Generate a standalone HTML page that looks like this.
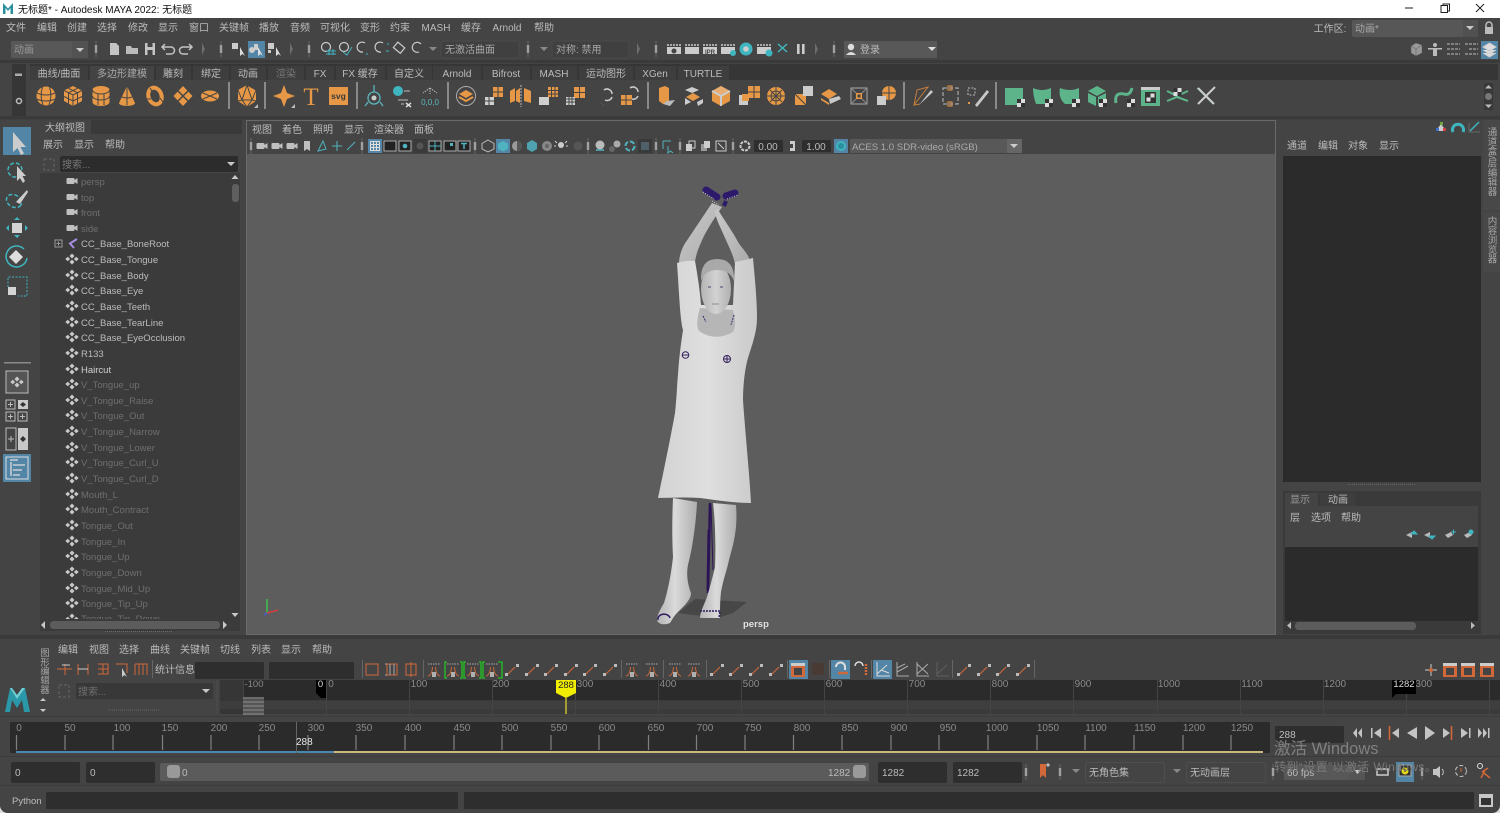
<!DOCTYPE html>
<html><head><meta charset="utf-8"><title>Autodesk MAYA 2022</title>
<style>
html,body{margin:0;padding:0;width:1500px;height:813px;overflow:hidden;background:#444}
svg{display:block;position:absolute;left:0;top:0;filter:blur(.3px)}
text{font-family:"Liberation Sans","Noto Sans CJK SC",sans-serif;font-size:10px;fill:#bcbcbc}
.c text{text-anchor:middle}
.d text{fill:#6f6f6f;font-size:9.5px}
.o text{font-size:9.5px}
.r text{fill:#8a8a8a;font-size:10px;text-anchor:middle}
</style></head><body>
<svg width="1500" height="813" viewBox="0 0 1500 813" xmlns="http://www.w3.org/2000/svg">
<defs>
<linearGradient id="lg" x1="0" x2="1" y1="0" y2="0"><stop offset="0" stop-color="#b4b4b4"/><stop offset=".45" stop-color="#dadada"/><stop offset="1" stop-color="#aeaeae"/></linearGradient>
<linearGradient id="ar" x1="0" x2="1" y1="0" y2="1"><stop offset="0" stop-color="#c8c8c8"/><stop offset=".6" stop-color="#b8b8b8"/><stop offset="1" stop-color="#a8a8a8"/></linearGradient>
<linearGradient id="dr" x1="0" x2="1" y1="0" y2="0"><stop offset="0" stop-color="#d2d2d2"/><stop offset=".5" stop-color="#dfdfdf"/><stop offset="1" stop-color="#cacaca"/></linearGradient>
<linearGradient id="fc" x1="0" x2="1" y1="0" y2="0"><stop offset="0" stop-color="#b4b4b4"/><stop offset=".5" stop-color="#d2d2d2"/><stop offset="1" stop-color="#b0b0b0"/></linearGradient>
<g id="h"><path d="M0-8V8" stroke="#666"/><rect x="-1.2" y="-4" width="2.4" height="8" fill="#a0a0a0"/></g>
<path id="t" d="M-1-6L2 0L-1 6Z" fill="#6e6e6e"/>
<path id="dn" d="M-4-2H4L0 2Z" fill="#c8c8c8"/>
<path id="dnd" d="M-4-2H4L0 2Z" fill="#888"/>
<g id="sep"><rect x="-1" y="-14" width="2" height="27" fill="#8a8a8a"/></g>
<path id="dia" d="M0-5.500L2.500-3L0-.5L-2.500-3ZM-4.200-2.300L-1.900 0L-4.200 2.300L-6.700 0ZM4.200-2.300L6.700 0L4.200 2.300L1.900 0ZM0 .5L2.500 3L0 5.500L-2.500 3Z" fill="#c9c9c9"/>
<g id="cam"><rect x="-5.500" y="-3" width="8" height="6" rx="1" fill="#c0c0c0"/><path d="M2.500-1L5.500-3V3L2.500 1Z" fill="#c0c0c0"/></g>
<g id="sp"><circle r="9.5" fill="#e69847"/><path d="M-9-3Q0 1 9-3M-9.5 3Q0 7 9.5 3M-3.500-9Q-6.500 0-3 9M3.500-9Q6.500 0 3 9" stroke="#444" fill="none"/></g>
<g id="cb"><path d="M0-10L9-5.500V5L0 10L-9 5V-5.500Z" fill="#e69847"/><path d="M-9-5.500L0-1L9-5.500M0-1V10M-4.500-7.700L4.500-3.300M4.500-7.700L-4.500-3.300M-4.500-3V7.500M4.500-3V7.500M-9 .5L0 5L9 .5" stroke="#444" fill="none"/></g>
<g id="cy"><path d="M-8.500-6A8.500 4 0 0 1 8.500-6V6A8.500 4 0 0 1-8.500 6Z" fill="#e69847"/><path d="M-8.500-6A8.500 4 0 0 0 8.500-6M-8.500 0A8.500 4 0 0 0 8.500 0M-3-2V9M3-2V9" stroke="#444" fill="none"/></g>
<g id="co"><path d="M0-10L8 7A8 3 0 0 1-8 7Z" fill="#e69847"/><path d="M0-10V9.500M-5 1Q0 3 5 1" stroke="#444" fill="none"/></g>
<g id="to"><ellipse rx="6.500" ry="8.500" transform="rotate(-20)" fill="none" stroke="#e69847" stroke-width="4"/><path d="M-5-8L-2-3M5 2L8 6M-8 3L-4 3" stroke="#444"/></g>
<g id="pl"><path d="M0-10L9.500 0L0 10L-9.500 0Z" fill="#e69847"/><path d="M-5-5L5 5M5-5L-5 5" stroke="#444" stroke-width="1.500"/></g>
<g id="di"><ellipse rx="9" ry="5.500" fill="#e69847"/><path d="M-7-3L7 3M7-3L-7 3" stroke="#444"/></g>
<g id="po"><path d="M0-11L9-6V5L0 11L-9 5V-6Z" fill="#e69847"/><path d="M0-11L-5 4L5 4ZM-9-6L-5 4L0 11L5 4L9-6L0-11M-9 5L-5 4M9 5L5 4" stroke="#444" fill="none"/><path d="M11 8V12H7Z" fill="#bbb"/></g>
<g id="og"><rect x="-1" y="-9" width="10" height="10" fill="#e69847"/><rect x="-9" y="1" width="9" height="8" fill="#cfcfcf"/><path d="M4-9V1M-1-4H9M-5 1V9M-9 5H0" stroke="#444"/></g>
<g id="sw"><path d="M-9-2L1 9H-9Z M-9-2V9H2Z" fill="#e69847"/><path d="M-9-2L2 9" stroke="#444"/><path d="M1-7A5 5 0 0 1 9-3M9 0A5 5 0 0 1 2 3" fill="none" stroke="#ccc" stroke-width="1.500"/></g>
<g id="st"><path d="M-9-2L-1-7L7-2L-1 3Z" fill="#e69847"/><path d="M-9 2L-1 7V9L-9 4Z" fill="#e69847"/><path d="M-1 3L9 0L11 3L0 8Z" fill="#c9c9c9"/></g>
<g id="bx"><path d="M0-10L9-5V5L0 10L-9 5V-5Z" fill="#e69847"/><path d="M0-10L9-5L0 0L-9-5Z" fill="#e8ad72"/><path d="M-9-5L0 0L9-5M0 0V10" stroke="#ccc" stroke-width="2" fill="none"/></g>
<g id="gs"><path d="M-9 9H9V-8H-9Z" fill="#5db48b"/></g>
<g id="ck"><rect x="-4" y="-4" width="8" height="8" fill="#ddd"/><path d="M-4-4H0V0H-4ZM0 0H4V4H0Z" fill="#333"/></g>
<g id="tk"><path d="M-6 6Q-2 5-1.500-3M6 6Q2 5 1.500-3" stroke="#c8683c" fill="none"/><path d="M-6-6H6" stroke="#aaa" stroke-dasharray="1.500 1"/><rect x="-2" y="2" width="4" height="5" fill="#b0b0b0"/></g>
<g id="cu"><path d="M-4 4L3-3" stroke="#c8683c" fill="none" stroke-width="1.200"/><rect x="-7" y="3" width="3" height="3" fill="#bbb"/><rect x="4" y="-6" width="3" height="3" fill="#bbb"/></g>
<g id="wi"><rect x="-7" y="-7" width="14" height="14" fill="#d0683a"/><rect x="-7" y="-7" width="14" height="3" fill="#ccc"/><rect x="-4" y="-2" width="8" height="7" fill="#444"/></g>
<g id="cl"><path d="M-7-3H7V4H-7Z" fill="#ccc"/><path d="M-7-5H7" stroke="#ccc" stroke-width="1.500" stroke-dasharray="2 1"/></g>
</defs>

<rect width="1500" height="813" fill="#444"/>
<!-- title -->
<rect width="1500" height="18" fill="#fff"/>
<path d="M3 14V3L8 8.500L13 3V14H10.500V8L8 11L5.500 8V14Z" fill="#2a8f9d"/>
<text x="18" y="13" style="fill:#111;font-size:10px">无标题* - Autodesk MAYA 2022: 无标题</text>
<path d="M1405 8H1413" stroke="#222"/><path d="M1441 5.500h6.500v7h-6.500zM1443 5.500v-1.500h6.500v7h-2" fill="none" stroke="#222"/><path d="M1476 4L1484 12M1484 4L1476 12" stroke="#222"/>

<!-- menu -->
<g class="c"><text x="16" y="31">文件</text><text x="47" y="31">编辑</text><text x="77" y="31">创建</text><text x="107" y="31">选择</text><text x="138" y="31">修改</text><text x="168" y="31">显示</text><text x="199" y="31">窗口</text><text x="234" y="31">关键帧</text><text x="269" y="31">播放</text><text x="300" y="31">音频</text><text x="335" y="31">可视化</text><text x="370" y="31">变形</text><text x="400" y="31">约束</text><text x="436" y="31">MASH</text><text x="471" y="31">缓存</text><text x="507" y="31">Arnold</text><text x="544" y="31">帮助</text><text x="1330" y="32">工作区:</text></g>
<rect x="1352" y="20" width="126" height="17" rx="2" fill="#575757"/><rect x="1463" y="20" width="15" height="17" fill="#515151"/><text x="1355" y="32" style="fill:#a8a8a8">动画*</text><use href="#dn" x="1470" y="28"/>
<path d="M1486 27V25a3 3 0 0 1 6 0V27" fill="none" stroke="#bbb" stroke-width="1.500"/><rect x="1485" y="27" width="8" height="7" fill="#bbb"/>

<!-- toolbar -->
<rect x="11" y="41" width="77" height="17" rx="1" fill="#585858"/><rect x="72" y="41" width="16" height="17" fill="#525252"/><text x="14" y="53" style="fill:#9a9a9a">动画</text><use href="#dn" x="80" y="50"/>
<use href="#h" x="96" y="49"/>
<path d="M110 43H116L119 46V55H110Z" fill="#c4c4c4"/>
<path d="M126 46H131L132 48H138V54H126Z" fill="#bbb"/>
<path d="M145 43H155V55H145Z" fill="#c4c4c4"/><rect x="147.500" y="43" width="5" height="4" fill="#444"/><rect x="147.500" y="50" width="5" height="5" fill="#444"/>
<path d="M163 47H171A3.500 3.500 0 0 1 171 54H166M165 44L162 47L165 50" fill="none" stroke="#c4c4c4" stroke-width="1.500"/>
<path d="M191 47H183A3.500 3.500 0 0 0 183 54H188M189 44L192 47L189 50" fill="none" stroke="#c4c4c4" stroke-width="1.500"/>
<use href="#t" x="203" y="49"/><use href="#h" x="221" y="49"/>
<rect x="248" y="41" width="17" height="17" fill="#5285a6"/>
<g fill="#ccc"><rect x="232" y="43" width="6" height="6"/><rect x="268" y="43" width="6" height="6"/><rect x="268" y="50" width="3" height="3"/><circle cx="252" cy="50" r="3"/><path d="M254 44H258V50H254Z"/>
<path d="M240 47L240 56L242.500 54L245 56Z" fill="#ddd"/><path d="M258 47V56L260.500 54L263 56Z" fill="#ddd"/><path d="M276 47V56L278.500 54L281 56Z" fill="#ddd"/></g>
<use href="#t" x="291" y="49"/><use href="#h" x="309" y="49"/>
<g fill="none" stroke="#ccc" stroke-width="1.200"><circle cx="326" cy="47" r="4.500"/><circle cx="344" cy="47" r="4.500"/><path d="M365 43a5 5 0 1 0-2 9"/><path d="M383 43a5 5 0 1 0-2 9"/><rect x="395" y="44" width="9" height="7" transform="rotate(40 399 47)"/><path d="M421 44a5 5 0 1 0-2 8"/></g>
<path d="M329 49V55M333 49V55M326 51H336M326 54H336M343 52L347 55L352 47M366 54L368 54M387 44H389M386 51H389" stroke="#3fb5c0" fill="none"/>
<use href="#dnd" x="433" y="49"/>
<rect x="441" y="41" width="78" height="17" rx="2" fill="#404040" stroke="#4a4a4a"/><text x="445" y="53" style="fill:#a8a8a8">无激活曲面</text>
<use href="#h" x="528" y="49"/><use href="#dnd" x="544" y="49"/>
<rect x="552" y="41" width="77" height="17" rx="2" fill="#404040" stroke="#4a4a4a"/><text x="556" y="53" style="fill:#a8a8a8">对称: 禁用</text>
<use href="#t" x="638" y="49"/><use href="#h" x="656" y="49"/>
<use href="#cl" x="674" y="50"/><use href="#cl" x="692" y="50"/><use href="#cl" x="710" y="50"/><use href="#cl" x="728" y="50"/><use href="#cl" x="764" y="50"/>
<circle cx="674" cy="51" r="2.500" fill="#444"/><text x="710" y="54" style="font-size:6px;fill:#444;text-anchor:middle;font-weight:bold">IPR</text>
<circle cx="733" cy="53" r="3" fill="#3fb5c0"/><circle cx="746" cy="49" r="6.500" fill="#3fb5c0"/><circle cx="746" cy="49" r="2.800" fill="#ccc"/><circle cx="769" cy="53" r="3.500" fill="#3fb5c0"/>
<path d="M778 52L787 44M778 44L787 52" stroke="#3fb5c0" stroke-width="1.500"/><rect x="797" y="44" width="2.600" height="10" fill="#ccc"/><rect x="802" y="44" width="2.600" height="10" fill="#ccc"/>
<use href="#t" x="816" y="49"/><use href="#h" x="834" y="49"/>
<rect x="844" y="41" width="93" height="17" fill="#585858"/><circle cx="851" cy="47" r="3.200" fill="#ddd"/><path d="M846 55Q851 49 856 55Z" fill="#ddd"/><text x="860" y="53">登录</text><path d="M928 47H936L932 51Z" fill="#ddd"/>
<path d="M1416 43L1422 45V53L1416 56L1411 53V46ZM1411 46L1416 49V56M1416 49L1422 45" fill="#999" stroke="#555" stroke-width=".5"/>
<g fill="#bbb"><circle cx="1435" cy="45" r="2"/><path d="M1428 48H1442V49.500H1437V56H1433V49.500H1428Z"/><path d="M1447 44H1460M1447 49H1460M1447 54H1460" stroke="#bbb" stroke-dasharray="3 1" fill="none"/><path d="M1465 44H1478M1469 49H1478M1465 54H1478" stroke="#bbb" stroke-dasharray="3 1" fill="none"/></g>
<rect x="1481" y="41" width="17" height="18" fill="#5285a6"/><path d="M1489.500 43L1496 47L1489.500 51L1483 47Z M1483 50L1489.500 54L1496 50M1483 53L1489.500 57L1496 53" fill="#ddd" stroke="#ccc"/>

<!-- separators -->
<rect y="60" width="1500" height="3" fill="#3a3a3a"/>
<rect x="30" y="64" width="1468" height="16" fill="#363636"/>
<rect x="12" y="64" width="14" height="52" fill="#363636"/>
<rect x="15" y="73.500" width="7" height="2.500" fill="#aaa"/><circle cx="19" cy="101" r="2.500" fill="none" stroke="#bbb" stroke-width="1.500"/>
<g fill="#3e3e3e"><rect x="30" y="66" width="58" height="14"/><rect x="156" y="66" width="35" height="14"/><rect x="193" y="66" width="36" height="14"/><rect x="231" y="66" width="35" height="14"/><rect x="268" y="66" width="36" height="14"/><rect x="306" y="66" width="28" height="14"/><rect x="336" y="66" width="49" height="14"/><rect x="387" y="66" width="45" height="14"/><rect x="433" y="66" width="48" height="14"/><rect x="483" y="66" width="47" height="14"/><rect x="532" y="66" width="45" height="14"/><rect x="579" y="66" width="54" height="14"/><rect x="635" y="66" width="41" height="14"/><rect x="678" y="66" width="51" height="14"/></g>
<rect x="90" y="66" width="64" height="14" fill="#444"/>
<g class="c"><text x="59" y="77">曲线/曲面</text><text x="122" y="77" style="fill:#aaa">多边形建模</text><text x="173" y="77">雕刻</text><text x="211" y="77">绑定</text><text x="248" y="77">动画</text><text x="286" y="77" style="fill:#777">渲染</text><text x="320" y="77">FX</text><text x="360" y="77">FX 缓存</text><text x="409" y="77">自定义</text><text x="457" y="77">Arnold</text><text x="506" y="77">Bifrost</text><text x="554" y="77">MASH</text><text x="606" y="77">运动图形</text><text x="655" y="77">XGen</text><text x="703" y="77">TURTLE</text></g>

<!-- shelf icons -->
<use href="#sp" x="46" y="96"/><use href="#cb" x="73" y="96"/><use href="#cy" x="101" y="96"/><use href="#co" x="127" y="96"/><use href="#to" x="155" y="96"/><use href="#pl" x="183" y="96"/><use href="#di" x="210" y="96"/>
<use href="#sep" x="229" y="96"/><use href="#po" x="247" y="96"/><use href="#sep" x="265" y="96"/>
<path d="M284 85L287 93L295 96L287 99L284 107L281 99L273 96L281 93Z" fill="#e69847"/><path d="M295 104V108H291Z" fill="#bbb"/>
<text x="311" y="105" style="font-family:'Liberation Serif',serif;font-size:25px;fill:#e69847;text-anchor:middle">T</text>
<rect x="329" y="87" width="19" height="18" fill="#e69847"/><text x="338.500" y="99" style="font-size:8.500px;fill:#3a3a3a;font-weight:bold;text-anchor:middle">svg</text>
<use href="#sep" x="357" y="96"/>
<g fill="none" stroke="#5cb5bf" stroke-width="1.300"><circle cx="374" cy="98" r="6"/><path d="M374 85V92M368 102L365 106M380 102L383 106"/></g><circle cx="374" cy="98" r="2.500" fill="#ccc"/>
<circle cx="398" cy="91" r="5" fill="#3fb5c0"/><path d="M404 91H410M398 100H408M401 104H404" stroke="#bbb"/><path d="M406 103L411 107M411 103L406 107" stroke="#ddd" stroke-width="1.500"/>
<path d="M430 88L423 93M430 88L437 93M430 88V94" stroke="#bbb" stroke-dasharray="1.500 1" fill="none"/><text x="430" y="105" style="font-size:8px;fill:#5cb5bf;text-anchor:middle">0,0,0</text>
<use href="#sep" x="448" y="96"/>
<circle cx="466" cy="96" r="9.500" fill="none" stroke="#aaa"/><path d="M466 90L473 94L466 98L459 94Z" fill="#e69847"/><path d="M459 97L466 101L473 97" fill="none" stroke="#e69847" stroke-width="2"/>
<use href="#og" x="494" y="96"/>
<path d="M510 91L515 88V101L510 103ZM524 88L531 91V103L524 101Z" fill="#e69847"/><path d="M516 91L520 88V103L516 101Z" fill="#e69847"/><path d="M521 85V107" stroke="#bbb" stroke-dasharray="2 1"/>
<g transform="translate(549 96)"><rect x="-1" y="-9" width="10" height="10" fill="#e69847"/><path d="M-1-5.500H9M-1-2H9M2.500-9V1M6-9V1" stroke="#444"/><rect x="-10" y="1" width="10" height="8" fill="#cfcfcf"/></g>
<g transform="translate(576 96)"><rect x="-2" y="-9" width="11" height="11" fill="#e69847"/><path d="M3.500-9V2M-2-3.500H9" stroke="#444"/><rect x="-10" y="1" width="9" height="8" fill="#cfcfcf"/><path d="M-10 3H-1M-10 6H-1M-7 1V9M-4 1V9" stroke="#444"/></g>
<use href="#sw" x="603" y="97"/>
<g transform="translate(630 96)"><rect x="-9" y="-1" width="11" height="10" fill="#e69847"/><path d="M-4-1V9M-9 4H2" stroke="#444"/><path d="M0-8A5 5 0 0 1 8-4M8 0A5 5 0 0 1 2 3" fill="none" stroke="#ccc" stroke-width="1.500"/></g>
<use href="#sep" x="648" y="96"/>
<g transform="translate(666 96)"><path d="M-7-8L-1-10L3-8V5L-3 8L-7 5Z" fill="#e69847"/><path d="M1 5L9 4L4 10L-3 8Z" fill="#bbb"/></g>
<g transform="translate(694 96)"><path d="M-9-6L-2-9L5-6L-2-3Z" fill="#ccc"/><path d="M-8 1L-1-3L6 1L-1 5Z" fill="#e69847"/><path d="M-9 2L-3 6L-9 9ZM3 6L9 3V7L4 10Z" fill="#ccc"/></g>
<use href="#bx" x="721" y="96"/>
<g transform="translate(749 96)"><rect x="-1" y="-10" width="12" height="12" fill="#e69847"/><path d="M-1-4H11M5-10V2" stroke="#444"/><rect x="-10" y="-1" width="9" height="10" fill="#ccc"/><rect x="-7" y="-2" width="7" height="7" fill="#e69847"/></g>
<g transform="translate(776 96)"><circle r="9" fill="#e69847"/><circle r="5" fill="none" stroke="#444"/><path d="M-9 0H9M0-9V9M-6-6L6 6M6-6L-6 6" stroke="#444"/></g>
<g transform="translate(804 96)"><path d="M-9-2L2 9H-9Z" fill="#e69847"/><path d="M-9-2L2-2L2 9Z" fill="#e69847"/><rect x="-1" y="-10" width="10" height="10" fill="#ccc"/><path d="M-9-2L2 9" stroke="#444"/></g>
<use href="#st" x="830" y="96"/>
<g transform="translate(859 96)"><rect x="-8" y="-8" width="16" height="16" fill="none" stroke="#aaa"/><path d="M-8-8L8 8M8-8L-8 8" stroke="#888"/><rect x="-3" y="-3" width="6" height="6" fill="#e69847"/><rect x="-1.500" y="-1.500" width="3" height="3" fill="#444"/></g>
<g transform="translate(886 96)"><circle cx="3" cy="-3" r="7" fill="#e69847"/><path d="M-4-3H10M3-10V4" stroke="#444"/><rect x="-9" y="0" width="9" height="9" fill="#ccc"/></g>
<use href="#sep" x="904" y="96"/>
<path d="M914 105L917 90L928 87L914 105L920 104" fill="none" stroke="#c47c3c"/><path d="M919 105L931 90L933 92Z" fill="#c9c9c9"/>
<path d="M943 88H958V104H943Z" fill="none" stroke="#bbb" stroke-dasharray="4 2"/><rect x="948" y="86" width="4" height="4" fill="none" stroke="#e69847"/><rect x="948" y="102" width="4" height="4" fill="none" stroke="#e69847"/>
<path d="M968 88H975V95H968Z" fill="none" stroke="#bbb" stroke-dasharray="2 1.500"/><path d="M975 105L987 90L989 92L977 107Z" fill="#c9c9c9"/><rect x="968" y="102" width="2" height="2" fill="#e69847"/>
<use href="#sep" x="996" y="96"/>
<use href="#gs" x="1014" y="96"/><use href="#ck" x="1021" y="103"/>
<path d="M1033 88Q1042 92 1051 88V104H1036Q1033 96 1033 88Z" fill="#5db48b"/><use href="#ck" x="1049" y="103"/>
<path d="M1060 88Q1070 92 1079 88V104H1065Q1058 98 1060 88Z" fill="#5db48b"/><use href="#ck" x="1076" y="103"/>
<path d="M1097 86L1106 91L1097 96L1088 91Z" fill="#5db48b"/><path d="M1088 93L1096 97V106L1088 102ZM1098 97L1106 93V102L1098 106Z" fill="#5db48b"/><use href="#ck" x="1103" y="103"/>
<path d="M1116 103Q1114 92 1124 94Q1130 96 1132 88" fill="none" stroke="#5db48b" stroke-width="3"/><use href="#ck" x="1131" y="103"/>
<rect x="1141" y="87" width="19" height="19" fill="#5db48b"/><rect x="1141" y="87" width="19" height="3" fill="#ccc"/><rect x="1145" y="92" width="11" height="11" fill="#333"/><use href="#ck" x="1150.500" y="97.500"/>
<path d="M1167 101L1177 97L1188 101M1167 91L1177 96L1188 91" stroke="#5db48b" stroke-width="2" fill="none"/><use href="#ck" x="1177.500" y="92"/>
<path d="M1197 88L1213 104" stroke="#5db48b"/><path d="M1198 104L1215 87M1198 88L1214 104" stroke="#ccc" stroke-width="2"/>
<rect x="1484" y="83" width="9" height="27" fill="#383838"/><path d="M1488.500 85L1492 88.500H1485ZM1488.500 108L1492 104.500H1485Z" fill="#bbb"/><circle cx="1488.500" cy="96.500" r="3.500" fill="#777"/>
<rect y="116" width="1500" height="3.500" fill="#3a3a3a"/>

<!-- toolbox -->
<rect x="3" y="127" width="28" height="28" fill="#5285a6"/>
<path d="M13 132L13 152L17.500 148L21 155L24 153.500L20.500 147H26Z" fill="#ccc"/>
<ellipse cx="15" cy="170" rx="7" ry="7" fill="none" stroke="#3fb5c0" stroke-width="1.500" stroke-dasharray="4 2" transform="rotate(30 15 170)"/><path d="M17 166V181L20 178L23 183L25 181L22.500 176H26Z" fill="#ccc"/>
<ellipse cx="14" cy="201" rx="8" ry="6" fill="none" stroke="#3fb5c0" stroke-width="1.500" stroke-dasharray="4 2" transform="rotate(30 14 201)"/><path d="M27 190L16 202L20 204L28 192Z" fill="#ccc"/>
<rect x="12" y="223" width="10" height="10" fill="#d4d4d4"/><path d="M17 217L20 220H14ZM17 238L20 235H14ZM6 228L9 225V231ZM28 228L25 225V231Z" fill="#3fb5c0"/>
<path d="M27 258A10.500 10.500 0 1 1 24 249" fill="none" stroke="#3fb5c0" stroke-width="1.500"/><path d="M16 250L23 257L16 264L9 257Z" fill="#ddd"/>
<rect x="8" y="287" width="8" height="8" fill="#d4d4d4"/><path d="M8 287V277H27V296H18" fill="none" stroke="#3fb5c0" stroke-dasharray="2 1.500"/>
<rect x="4" y="362" width="27" height="1.500" fill="#8a8a8a"/>
<rect x="6" y="371" width="22" height="22" fill="#555" stroke="#bbb"/><use href="#dia" x="17" y="382"/>
<g fill="none" stroke="#bbb"><rect x="6" y="400" width="9" height="9"/><rect x="6" y="412" width="9" height="9"/><rect x="18" y="412" width="9" height="9"/><rect x="6" y="428" width="10" height="22"/></g>
<rect x="18" y="400" width="10" height="9" fill="#c8c8c8"/><path d="M8 404.500H13M10.500 402V407M8 416.500H13M10.500 414V419M20 416.500H25M22.500 414V419M8 439H14M11 436V442" stroke="#bbb"/>
<rect x="18" y="428" width="10" height="22" fill="#c8c8c8"/><path d="M23 402L26 404.500L23 407L20 404.500ZM23 436L26 439L23 442L20 439Z" fill="#333"/>
<rect x="3" y="454" width="28" height="28" fill="#5285a6"/><rect x="6" y="457" width="22" height="22" fill="none" stroke="#ddd"/><path d="M10 460H18M13 465H25M13 470H22M13 475H20M11 462V476" stroke="#ddd" fill="none" stroke-width="1.300"/>

<!-- outliner -->
<rect x="37" y="120" width="54" height="14" fill="#444"/>
<rect x="37" y="134" width="205" height="501" fill="#444"/>
<rect x="91" y="120" width="151" height="14" fill="#3a3a3a"/>
<text x="45" y="131">大纲视图</text>
<g class="c"><text x="53" y="148">展示</text><text x="84" y="148">显示</text><text x="115" y="148">帮助</text></g>
<rect x="44" y="159" width="10" height="11" fill="none" stroke="#666" stroke-dasharray="3 2"/>
<rect x="60" y="156" width="178" height="16" rx="2" fill="#2c2c2c"/><text x="62" y="168" style="fill:#777">搜索...</text><path d="M227 162H235L231 166Z" fill="#c8c8c8"/>
<rect x="40" y="173" width="200" height="446" fill="#3b3b3b"/>
<path d="M235 175L238.500 179H231.500ZM235 617L238.500 613H231.500Z" fill="#c8c8c8"/><rect x="232" y="184" width="7" height="18" rx="3" fill="#5f5f5f"/>
<g>
<use href="#cam" x="72" y="181"/><use href="#cam" x="72" y="197"/><use href="#cam" x="72" y="212"/><use href="#cam" x="72" y="228"/>
<rect x="55" y="240" width="7" height="7" fill="none" stroke="#999"/><path d="M56.500 243.500H60.500M58.500 241.500V245.500" stroke="#999"/>
<path d="M77 239L70 243.500L74 248" fill="none" stroke="#a78ce0" stroke-width="2"/>
<use href="#dia" x="72" y="259"/><use href="#dia" x="72" y="275"/><use href="#dia" x="72" y="290"/><use href="#dia" x="72" y="306"/><use href="#dia" x="72" y="322"/><use href="#dia" x="72" y="337"/><use href="#dia" x="72" y="353"/><use href="#dia" x="72" y="369"/><use href="#dia" x="72" y="384"/><use href="#dia" x="72" y="400"/><use href="#dia" x="72" y="415"/><use href="#dia" x="72" y="431"/><use href="#dia" x="72" y="447"/><use href="#dia" x="72" y="462"/><use href="#dia" x="72" y="478"/><use href="#dia" x="72" y="494"/><use href="#dia" x="72" y="509"/><use href="#dia" x="72" y="525"/><use href="#dia" x="72" y="541"/><use href="#dia" x="72" y="556"/><use href="#dia" x="72" y="572"/><use href="#dia" x="72" y="588"/><use href="#dia" x="72" y="603"/><use href="#dia" x="72" y="619"/>
</g>
<g class="d"><text x="81" y="185">persp</text><text x="81" y="201">top</text><text x="81" y="216">front</text><text x="81" y="232">side</text>
<text x="81" y="388">V_Tongue_up</text><text x="81" y="404">V_Tongue_Raise</text><text x="81" y="419">V_Tongue_Out</text><text x="81" y="435">V_Tongue_Narrow</text><text x="81" y="451">V_Tongue_Lower</text><text x="81" y="466">V_Tongue_Curl_U</text><text x="81" y="482">V_Tongue_Curl_D</text><text x="81" y="498">Mouth_L</text><text x="81" y="513">Mouth_Contract</text><text x="81" y="529">Tongue_Out</text><text x="81" y="545">Tongue_In</text><text x="81" y="560">Tongue_Up</text><text x="81" y="576">Tongue_Down</text><text x="81" y="592">Tongue_Mid_Up</text><text x="81" y="607">Tongue_Tip_Up</text><text x="81" y="622">Tongue_Tip_Down</text></g>
<g class="o"><text x="81" y="247">CC_Base_BoneRoot</text><text x="81" y="263">CC_Base_Tongue</text><text x="81" y="279">CC_Base_Body</text><text x="81" y="294">CC_Base_Eye</text><text x="81" y="310">CC_Base_Teeth</text><text x="81" y="326">CC_Base_TearLine</text><text x="81" y="341">CC_Base_EyeOcclusion</text><text x="81" y="357">R133</text><text x="81" y="373" style="fill:#d0d0d0">Haircut</text></g>
<rect x="40" y="619" width="200" height="12" fill="#3b3b3b"/>
<path d="M41 625L45 621V629ZM227 625L223 621V629Z" fill="#c8c8c8"/><rect x="50" y="621" width="170" height="8" rx="3.500" fill="#5c5c5c"/>
<path d="M105 631.500H172" stroke="#6a6a6a" stroke-dasharray="1 1"/>
<rect y="635" width="1500" height="4" fill="#3a3a3a"/>

<!-- viewport -->
<rect x="246" y="120" width="1030" height="515" fill="#6a6a6a"/>
<rect x="247" y="121" width="1028" height="33" fill="#444"/>
<rect x="247" y="154" width="1028" height="480" fill="#5d5d5d"/>
<g class="c"><text x="262" y="133">视图</text><text x="292" y="133">着色</text><text x="323" y="133">照明</text><text x="354" y="133">显示</text><text x="389" y="133">渲染器</text><text x="424" y="133">面板</text></g>
<g>
<use href="#h" x="251" y="146"/>
<use href="#cam" x="262" y="146"/><use href="#cam" x="277" y="146"/><use href="#cam" x="292" y="146"/>
<path d="M304 141H310V151L307 149L304 151Z" fill="#c0c0c0"/>
<path d="M318 151L323 141L326 149Z M332 146H342M337 141V151M347 150L355 142" stroke="#4fb3bf" fill="none"/>
<use href="#h" x="362" y="146"/>
<rect x="368" y="139" width="14" height="14" fill="#5285a6"/>
<g fill="none" stroke="#ddd"><rect x="370.500" y="141.500" width="9" height="9"/><path d="M370.500 144.500H379.500M370.500 147.500H379.500M373.500 141.500V150.500M376.500 141.500V150.500"/></g>
<rect x="384" y="141" width="12" height="10" fill="#222" stroke="#aaa"/><rect x="399" y="141" width="12" height="10" fill="#222" stroke="#aaa"/><circle cx="405" cy="146" r="2.300" fill="#4fb3bf"/>
<rect x="413" y="139" width="14" height="14" fill="#3a3a3a"/><circle cx="420" cy="146" r="3.500" fill="#555"/>
<rect x="429" y="141" width="12" height="10" fill="#222" stroke="#aaa"/><path d="M435 141V151M429 146H441" stroke="#4fb3bf"/>
<rect x="444" y="141" width="12" height="10" fill="#222" stroke="#aaa"/><rect x="450" y="143" width="3" height="3" fill="#4fb3bf"/>
<rect x="458" y="141" width="12" height="10" fill="#222" stroke="#aaa"/><path d="M461 143.500H467M464 143.500V149" stroke="#4fb3bf" stroke-width="1.500"/>
<use href="#h" x="475" y="146"/>
<path d="M488 140L494 143.500V149L488 152L482 149V143.500Z" fill="none" stroke="#bbb"/>
<rect x="496" y="139" width="14" height="14" fill="#5285a6"/><path d="M503 141L508 143.500V149L503 151.500L498 149V143.500Z" fill="#4fb3bf"/>
<circle cx="517" cy="146" r="5" fill="#999"/><path d="M517 141A5 5 0 0 1 517 151Z" fill="#555"/>
<path d="M532 140L537 143V149L532 152L527 149V143Z" fill="#4fa3b0"/><circle cx="547" cy="146" r="5" fill="#888"/><circle cx="547" cy="146" r="2" fill="#666"/>
<circle cx="561" cy="145" r="3" fill="#ccc"/><path d="M555 141L557 143M567 141L565 143M554 146H556M566 146H568" stroke="#ccc"/>
<circle cx="578" cy="146" r="4.500" fill="#555"/>
<use href="#h" x="588" y="146"/>
<circle cx="600" cy="145" r="4.500" fill="#bbb"/><path d="M596 150H604" stroke="#4fb3bf" stroke-width="1.500"/>
<circle cx="612" cy="149" r="3" fill="#666"/><circle cx="617" cy="144" r="3.500" fill="#aaa"/>
<circle cx="630" cy="146" r="4.500" fill="none" stroke="#4fb3bf" stroke-width="2" stroke-dasharray="5 2"/>
<rect x="638" y="139" width="14" height="14" fill="#3a3a3a"/><rect x="641" y="142" width="8" height="8" fill="#4f6168"/>
<use href="#h" x="656" y="146"/>
<path d="M663 141H671M663 141V149M668 146V153L670.500 151L673 153" stroke="#4fb3bf" fill="none"/>
<use href="#h" x="680" y="146"/>
<rect x="686" y="144" width="6" height="7" fill="#ccc"/><rect x="689" y="141" width="6" height="7" fill="none" stroke="#ccc"/>
<rect x="701" y="144" width="6" height="7" fill="#999"/><rect x="704" y="141" width="6" height="7" fill="#ccc"/>
<rect x="716" y="141" width="10" height="10" fill="none" stroke="#ccc"/><path d="M718 143L724 149" stroke="#ccc"/>
<use href="#h" x="733" y="146"/>
<circle cx="745" cy="146" r="4.500" fill="none" stroke="#ccc" stroke-width="2" stroke-dasharray="3 1"/>
<rect x="754" y="140" width="29" height="12" rx="1" fill="#2e2e2e"/><text x="768" y="150" style="text-anchor:middle">0.00</text>
<path d="M790 141H795V151H790V148H793V144H790Z" fill="#ccc"/>
<rect x="802" y="140" width="29" height="12" rx="1" fill="#2e2e2e"/><text x="816" y="150" style="text-anchor:middle">1.00</text>
<rect x="834" y="139" width="14" height="14" fill="#5285a6"/><circle cx="841" cy="146" r="5" fill="#3fb5c0"/><circle cx="841" cy="146" r="3" fill="#2c8f9c"/>
<rect x="850" y="139" width="172" height="14" fill="#585858"/><text x="852" y="150" style="font-size:9.600px;fill:#aaa">ACES 1.0 SDR-video (sRGB)</text>
<rect x="1007" y="139" width="15" height="14" fill="#666"/><path d="M1010 144H1018L1014 148Z" fill="#ccc"/>
</g>

<!-- figure -->
<g>
<path d="M678 613L695 599L747 602L733 613L718 618Z" fill="#474747"/>
<path d="M710 503L708 593" stroke="#2b1456" stroke-width="2.500"/><path d="M711 505L713 570M708 530L707 590" stroke="#2b1456"/>
<path d="M673 498C672 520 672 540 673 557C671 575 668 590 664 603C660 610 657 615 657 620C658 625 666 625 670 623C673 618 675 615 677 613C684 606 691 600 691 593C688 585 686 575 688 565C692 550 696 525 697 502Z" fill="url(#lg)"/>
<path d="M713 503C715 520 716 545 715 567C712 580 709 590 707 597C704 605 700 612 700 618L720 618C720 610 720 600 721 592C723 580 727 570 729 560C733 545 738 530 736 505Z" fill="url(#lg)"/>
<path d="M658 620A5 4 0 0 1 670 618" fill="none" stroke="#2e1a5e" stroke-width="1.500"/>
<path d="M700 611H720L719 618" fill="none" stroke="#2e1a5e" stroke-width="1.500" stroke-dasharray="2 1"/>
<path d="M712 203C704 215 692 233 684 245C681 251 679 257 679 264L695 262C696 254 699 247 703 238C709 226 716 216 722 207Z" fill="url(#ar)"/>
<path d="M717 208C724 220 733 232 738 242C743 250 749 254 750 262L735 264C733 254 729 247 725 238C721 228 716 220 715 212Z" fill="url(#ar)"/>
<path d="M677 263Q686 260 695 261C697 272 700 290 701 305L733 305L735 262Q745 260 753 258C755 280 757 300 757 318C757 332 752 345 748 358C745 368 743 385 743 400C745 430 750 480 751 503C735 503 715 500 700 498C685 497 670 498 658 498C664 470 672 430 675 413C677 395 677 383 678 375C679 360 680 350 683 330C680 320 679 290 677 263Z" fill="url(#dr)"/>
<path d="M700 308Q695 325 699 331Q715 342 733 332Q737 325 733 310Z" fill="#b6b6b6"/>
<ellipse cx="716" cy="289" rx="15" ry="25" fill="url(#fc)"/>
<path d="M701 281Q700 259 717 259Q735 259 734 281Q730 270 717 270Q705 270 701 281Z" fill="#a9a9a9"/>
<path d="M708 287H711M720 287H723" stroke="#4c4270"/><path d="M712 304H719" stroke="#8c8c8c"/>
<path d="M703 316L706 322M734 315L731 325" stroke="#3a2568" stroke-dasharray="2 1"/>
<g fill="none" stroke="#35205e"><circle cx="685.500" cy="355" r="3.300"/><path d="M682.500 355H688.500"/><circle cx="727" cy="359" r="3.500"/><path d="M723.500 359H730.500M727 355.500V362.500"/></g>
<path d="M706 190L717 197M726 196L735 193" stroke="#2e1a6a" stroke-width="7" stroke-linecap="round"/><path d="M726 201L724 206" stroke="#2e1a6a" stroke-width="4"/>
<path d="M703 192L714 199M727 199L738 195M712 201L719 205" stroke="#d0d0d0" stroke-dasharray="1 1.500"/>
<path d="M267 613V599" stroke="#3ec04e" stroke-width="1.500"/><path d="M267 613L278 610" stroke="#d53d3d" stroke-width="1.500"/><path d="M267 613L264 615" stroke="#3d5fd5" stroke-width="1.500"/>
<text x="743" y="627" style="fill:#e0e0e0;font-weight:bold;font-size:9.500px">persp</text>
</g>

<!-- channel box -->
<rect x="1279" y="120" width="204" height="515" fill="#444"/>
<path d="M1441 124L1444 128L1446 131H1436L1438 128Z" fill="#ccc"/><rect x="1440" y="122" width="3" height="3" fill="#6ea83b"/><rect x="1436" y="128" width="3" height="3" fill="#3b6fd0"/><rect x="1443" y="128" width="3" height="3" fill="#d04040"/>
<path d="M1453 132a5.500 5.500 0 1 1 10 0" fill="none" stroke="#3fb5c0" stroke-width="3"/>
<path d="M1469 123V132H1480" stroke="#666" fill="none"/><path d="M1470 131L1479 122" stroke="#3fb5c0" stroke-width="1.500"/>
<g class="c"><text x="1297" y="149">通道</text><text x="1328" y="149">编辑</text><text x="1358" y="149">对象</text><text x="1389" y="149">显示</text></g>
<rect x="1283" y="156" width="198" height="326" fill="#2b2b2b"/>
<path d="M1348 484.500H1415" stroke="#666" stroke-dasharray="1 1"/>
<rect x="1283" y="491" width="198" height="143" fill="#3a3a3a"/>
<rect x="1285" y="493" width="33" height="15" fill="#444"/><rect x="1320" y="493" width="35" height="15" fill="#3e3e3e"/><rect x="1285" y="506" width="193" height="41" fill="#444"/>
<g class="c"><text x="1300" y="503" style="fill:#999">显示</text><text x="1338" y="503">动画</text><text x="1295" y="521">层</text><text x="1321" y="521">选项</text><text x="1351" y="521">帮助</text></g>
<g fill="#bbb"><path d="M1406 535L1412 532V538Z"/><path d="M1424 535L1430 532V538Z"/><path d="M1445 535L1451 532L1453 535L1448 538Z"/><path d="M1464 535L1470 532L1472 535L1467 538Z"/></g>
<path d="M1414 531L1417 534H1411ZM1432 539L1435 536H1429ZM1451 532H1456M1453.500 529.500V534.500" fill="#3fb5c0" stroke="#3fb5c0"/><circle cx="1471" cy="532" r="2.500" fill="#3fb5c0"/>
<rect x="1285" y="547" width="193" height="74" fill="#2b2b2b"/>
<rect x="1285" y="621" width="193" height="11" fill="#3a3a3a"/>
<path d="M1287 625.500L1291 622V629ZM1475 625.500L1471 622V629Z" fill="#bbb"/><rect x="1295" y="622" width="121" height="8" rx="3.500" fill="#5c5c5c"/>
<rect x="1483" y="120" width="17" height="90" fill="#484848"/><rect x="1483" y="212" width="17" height="60" fill="#484848"/>
<text x="1491" y="127" style="writing-mode:vertical-rl;font-size:9.500px;fill:#a8a8a8">通道盒/层编辑器</text>
<text x="1491" y="216" style="writing-mode:vertical-rl;font-size:9.500px;fill:#a8a8a8">内容浏览器</text>

<!-- graph editor -->
<g class="c"><text x="68" y="653">编辑</text><text x="99" y="653">视图</text><text x="129" y="653">选择</text><text x="160" y="653">曲线</text><text x="195" y="653">关键帧</text><text x="230" y="653">切线</text><text x="261" y="653">列表</text><text x="291" y="653">显示</text><text x="322" y="653">帮助</text></g>
<text x="44" y="648" style="writing-mode:vertical-rl;font-size:9.200px;fill:#a8a8a8">图形编辑器</text>
<path d="M43 698L46 701H40ZM43 712L46 709H40Z" fill="#c8c8c8"/>
<path d="M5 712L10 688L17 699L25 688L30 712H24L22 700L17 708L12 700L10 712Z" fill="#2a98a8"/><path d="M10 688L17 699L25 688L22 688L17 695L12 688Z" fill="#6fd0d8"/>
<path d="M65 664V675M57 669H72M78 664V675M88 664V675M98 664H108V674H98M98 669H108M103 664V674M116 664H127V673" stroke="#d0683a" fill="none"/>
<path d="M62 665H70M78 669H88" stroke="#ccc"/><path d="M122 668V677L124.500 675L127 677" fill="#ccc"/>
<path d="M135 664H147V675M139 664V675M143 664V675M135 664V675" stroke="#d0683a" fill="none"/>
<rect x="152" y="660" width="1" height="18" fill="#666"/><text x="155" y="673">统计信息</text>
<rect x="195" y="662" width="69" height="17" rx="1" fill="#2e2e2e"/><rect x="269" y="662" width="85" height="17" rx="1" fill="#2e2e2e"/>
<rect x="362" y="660" width="1" height="18" fill="#666"/>
<path d="M366 664H378V675H366ZM387 664H397V675H387ZM406 664H416V675H406ZM411 662V677" stroke="#d0683a" fill="none"/>
<path d="M390 664V675M394 664V675M385 664H387M385 675H387" stroke="#aaa" fill="none"/>
<rect x="423" y="660" width="1" height="18" fill="#666"/>
<use href="#tk" x="434" y="670"/><use href="#tk" x="453" y="670"/><use href="#tk" x="473" y="670"/><use href="#tk" x="492" y="670"/>
<path d="M447 662H445V678H447M460 662H462V678H460M466 662H464V678H466M479 662H481V678H479M485 662H483V678H485M498 662H502V678H498" fill="none" stroke="#22c422" stroke-width="1.300"/>
<use href="#cu" x="512" y="670"/><use href="#cu" x="532" y="670"/><use href="#cu" x="551" y="670"/><use href="#cu" x="571" y="670"/><use href="#cu" x="590" y="670"/><use href="#cu" x="610" y="670"/>
<rect x="621" y="660" width="1" height="18" fill="#666"/><use href="#tk" x="632" y="670"/><use href="#tk" x="652" y="670"/>
<rect x="663" y="660" width="1" height="18" fill="#666"/><use href="#tk" x="675" y="670"/><use href="#tk" x="694" y="670"/>
<rect x="706" y="660" width="1" height="18" fill="#666"/><use href="#cu" x="717" y="670"/><use href="#cu" x="736" y="670"/><use href="#cu" x="756" y="670"/><use href="#cu" x="776" y="670"/>
<rect x="787" y="660" width="1" height="18" fill="#666"/>
<rect x="789" y="660" width="19" height="19" fill="#5285a6"/><use href="#wi" x="798" y="670"/><rect x="812" y="663" width="12" height="12" fill="#4a3a34"/>
<rect x="829" y="660" width="1" height="18" fill="#666"/><rect x="831" y="660" width="19" height="19" fill="#5285a6"/>
<path d="M836 667A4 4 0 0 1 845 667V670" fill="none" stroke="#ddd" stroke-width="2"/><path d="M838 673H848" stroke="#d0683a" stroke-width="2.500"/>
<path d="M855 666A4 4 0 0 1 863 666" fill="none" stroke="#ddd" stroke-width="1.500"/><path d="M866 664V676" stroke="#d0683a" stroke-width="2.500" stroke-dasharray="2 1"/>
<rect x="871" y="660" width="1" height="18" fill="#666"/><rect x="873" y="660" width="19" height="19" fill="#5285a6"/>
<path d="M877 662V676H890M877 674L887 665M881 670L889 673" stroke="#ddd" fill="none"/>
<path d="M897 662V676H909M897 672L908 666M897 668L905 664" stroke="#aaa" fill="none"/><path d="M917 662V676H929M917 664L928 674M917 674L928 664" stroke="#aaa" fill="none"/><path d="M937 662V676H949M937 674L947 665" stroke="#5f5f5f" fill="none"/>
<rect x="952" y="660" width="1" height="18" fill="#666"/>
<use href="#cu" x="964" y="670"/><use href="#cu" x="984" y="670"/><use href="#cu" x="1003" y="670"/><use href="#cu" x="1023" y="670"/>
<rect x="1034" y="660" width="1" height="18" fill="#666"/>
<path d="M1431 664V676M1425 670H1437" stroke="#ccc"/><circle cx="1431" cy="670" r="2" fill="#d0683a"/>
<use href="#wi" x="1450" y="670"/><use href="#wi" x="1468" y="670"/><use href="#wi" x="1487" y="670"/>
<rect x="59" y="685" width="10" height="12" fill="none" stroke="#666" stroke-dasharray="3 2"/>
<rect x="76" y="683" width="137" height="16" rx="2" fill="#383838"/><text x="78" y="695" style="fill:#6f6f6f">搜索...</text><path d="M202 689H210L206 693Z" fill="#c8c8c8"/>
<path d="M108 710H160" stroke="#666" stroke-dasharray="1 1"/>
<path d="M217 680V714" stroke="#565656" stroke-dasharray="1 1"/>
<rect x="220" y="680" width="1280" height="20" fill="#2b2b2b"/><rect x="220" y="700" width="1280" height="14" fill="#3a3a3a"/><rect x="220" y="680" width="23" height="34" fill="#363636"/>
<path d="M220 702H1500M220 704H1500M220 706H1500M220 708H1500" stroke="#444"/>
<g stroke="#444"><path d="M243.500 680V714M326.500 680V714M409.500 680V714M492.500 680V714M575.500 680V714M658.500 680V714M741.500 680V714M824.500 680V714M907.500 680V714M990.500 680V714M1073.500 680V714M1157.500 680V714M1240.500 680V714M1323.500 680V714M1406.500 680V714M1489.500 680V714"/></g>
<path d="M243 697V715H264V697Z" fill="#888" opacity=".7"/><path d="M243 700H264M243 704H264M243 708H264M243 712H264" stroke="#3a3a3a"/>
<path d="M316 680H326V698H321L316 693Z" fill="#000"/><text x="320.500" y="687" style="fill:#ddd;text-anchor:middle;font-size:9.500px">0</text>
<g class="r"><text x="254" y="687" style="font-size:9.500px">-100</text><text x="331" y="687">0</text><text x="419" y="687">100</text><text x="501" y="687">200</text><text x="585" y="687">300</text><text x="668" y="687">400</text><text x="751" y="687">500</text><text x="834" y="687">600</text><text x="917" y="687">700</text><text x="1000" y="687">800</text><text x="1083" y="687">900</text><text x="1169" y="687">1000</text><text x="1252" y="687">1100</text><text x="1335" y="687">1200</text><text x="1421" y="687">1300</text></g>
<path d="M556 680H576V693L566 698L556 693Z" fill="#f2ee00"/><text x="566" y="688" style="fill:#222;text-anchor:middle;font-size:9.500px">288</text><path d="M566 697V714" stroke="#c7bf2c" stroke-width="1.500"/>
<path d="M1392 680H1416V694H1396L1392 698Z" fill="#000"/><text x="1404" y="687" style="fill:#ddd;text-anchor:middle;font-size:9.500px">1282</text>
<rect y="716" width="1500" height="1" fill="#3b3b3b"/>

<!-- time slider -->
<rect x="10" y="722" width="1260" height="31" fill="#2b2b2b"/>
<g class="r"><text x="19" y="731">0</text><text x="70" y="731">50</text><text x="122" y="731">100</text><text x="170" y="731">150</text><text x="219" y="731">200</text><text x="267" y="731">250</text><text x="316" y="731">300</text><text x="364" y="731">350</text><text x="413" y="731">400</text><text x="462" y="731">450</text><text x="510" y="731">500</text><text x="559" y="731">550</text><text x="607" y="731">600</text><text x="656" y="731">650</text><text x="705" y="731">700</text><text x="753" y="731">750</text><text x="802" y="731">800</text><text x="850" y="731">850</text><text x="899" y="731">900</text><text x="948" y="731">950</text><text x="997" y="731">1000</text><text x="1048" y="731">1050</text><text x="1096" y="731">1100</text><text x="1145" y="731">1150</text><text x="1194" y="731">1200</text><text x="1242" y="731">1250</text></g>
<path d="M16.500 735V750M65 735V750M113 735V750M162.500 735V750M211 735V750M259 735V750M308 735V750M356 735V750M405 735V750M454 735V750M502 735V750M551 735V750M599 735V750M648.500 735V750M696.500 735V750M745 735V750M793.500 735V750M842 735V750M891 735V750M939 735V750M988 735V750M1037 735V750M1085 735V750M1134 735V750M1183 735V750M1231 735V750" stroke="#808080" stroke-width="1.200"/>
<rect x="16" y="751" width="318" height="2" fill="#4a88b0"/><rect x="334" y="751" width="929" height="2" fill="#c9b97c"/>
<path d="M296.500 722V753" stroke="#666"/><text x="296" y="745" style="fill:#e8e8e8;font-size:10px">288</text>
<rect x="1275" y="726" width="69" height="17" rx="1" fill="#2e2e2e"/><text x="1279" y="738">288</text>
<g fill="#c4c4c4"><path d="M1351 728V738M1353 733L1357 728V738ZM1358 733L1362 728V738Z"/><path d="M1371 728H1372.500V738H1371ZM1374 733L1381 728V738Z"/><path d="M1392 733L1399 728V738Z"/><path d="M1407 733L1417 727V739Z"/><path d="M1425 726L1435 733L1425 740Z"/><path d="M1443 728L1450 733L1443 738Z"/><path d="M1461 728L1468 733L1461 738ZM1469 728H1470.500V738H1469Z"/><path d="M1478 728L1482 733L1478 738ZM1483 728L1487 733L1483 738ZM1488 728H1489.500V738H1488Z"/></g>
<path d="M1389.500 726V740M1451.500 726V740" stroke="#d0683a" stroke-width="1.600"/>
<rect y="756" width="1500" height="1" fill="#3b3b3b"/>

<!-- range -->
<rect x="11" y="762" width="69" height="21" rx="2" fill="#2e2e2e"/><text x="15" y="776">0</text>
<rect x="86" y="762" width="69" height="21" rx="2" fill="#2e2e2e"/><text x="90" y="776">0</text>
<rect x="160" y="763" width="709" height="18" rx="2" fill="#5b5b5b"/>
<rect x="167" y="765" width="13" height="13" rx="3" fill="#999"/><text x="182" y="776">0</text><text x="828" y="776">1282</text><rect x="853" y="765" width="13" height="13" rx="3" fill="#999"/>
<rect x="878" y="762" width="69" height="21" rx="2" fill="#2e2e2e"/><text x="882" y="776">1282</text>
<rect x="953" y="762" width="69" height="21" rx="2" fill="#2e2e2e"/><text x="957" y="776">1282</text>
<use href="#h" x="1026" y="772"/><path d="M1040 764H1046V778L1043 775L1040 778Z" fill="#d0683a"/><path d="M1046 765H1050M1048 763V767" stroke="#ddd"/>
<use href="#h" x="1060" y="772"/><use href="#dnd" x="1076" y="771"/>
<rect x="1085.500" y="762.500" width="79" height="20" rx="2" fill="none" stroke="#4e4e4e"/><text x="1089" y="776">无角色集</text><use href="#dnd" x="1177" y="771"/>
<rect x="1186.500" y="762.500" width="79" height="20" rx="2" fill="none" stroke="#4e4e4e"/><text x="1190" y="776">无动画层</text>
<use href="#h" x="1273" y="772"/>
<rect x="1284" y="765" width="81" height="15" fill="#585858"/><rect x="1349" y="765" width="16" height="15" fill="#555"/><text x="1287" y="776">60 fps</text><path d="M1354 770H1361L1357.500 774Z" fill="#ccc"/>
<path d="M1377 769H1388V775H1377Z" fill="none" stroke="#ccc" stroke-width="1.500"/>
<rect x="1396" y="762" width="18" height="20" fill="#5285a6"/><rect x="1399" y="765" width="12" height="11" fill="#333" stroke="#aaa"/><circle cx="1405" cy="771" r="3.500" fill="#e6d818"/><path d="M1405 768.500V772" stroke="#333"/>
<use href="#h" x="1422" y="772"/><path d="M1433 769H1436L1440 766V778L1436 775H1433Z" fill="#c4c4c4"/><path d="M1442 769A4 4 0 0 1 1442 775" fill="none" stroke="#c4c4c4"/>
<circle cx="1461" cy="771" r="5.500" fill="none" stroke="#c4c4c4" stroke-dasharray="4 2"/><path d="M1461 768V772" stroke="#d0683a"/>
<circle cx="1480" cy="766" r="2.500" fill="none" stroke="#ddd"/><path d="M1482 772L1488 768M1485 770L1481 778M1484 773L1490 778" stroke="#d0683a" stroke-width="1.500"/>
<text x="1274" y="754" style="font-size:16.500px;fill:#808080">激活 Windows</text>
<text x="1274" y="771" style="font-size:12px;letter-spacing:.4px;fill:#787878">转到“设置”以激活 Windows。</text>
<rect y="785" width="1500" height="1" fill="#3b3b3b"/>

<!-- cmd -->
<text x="12" y="804" style="font-size:9.500px">Python</text>
<rect x="46" y="792" width="412" height="17" rx="1" fill="#2e2e2e"/><rect x="464" y="792" width="1010" height="17" rx="1" fill="#2e2e2e"/>
<rect x="1479" y="794" width="14" height="13" fill="#c8c8c8"/><rect x="1481" y="798" width="10" height="7" fill="#333"/>
<path d="M0 813V806A8 8 0 0 0 7 813ZM1500 813V806A8 8 0 0 1 1493 813Z" fill="#ddd"/>
</svg>
</body></html>
